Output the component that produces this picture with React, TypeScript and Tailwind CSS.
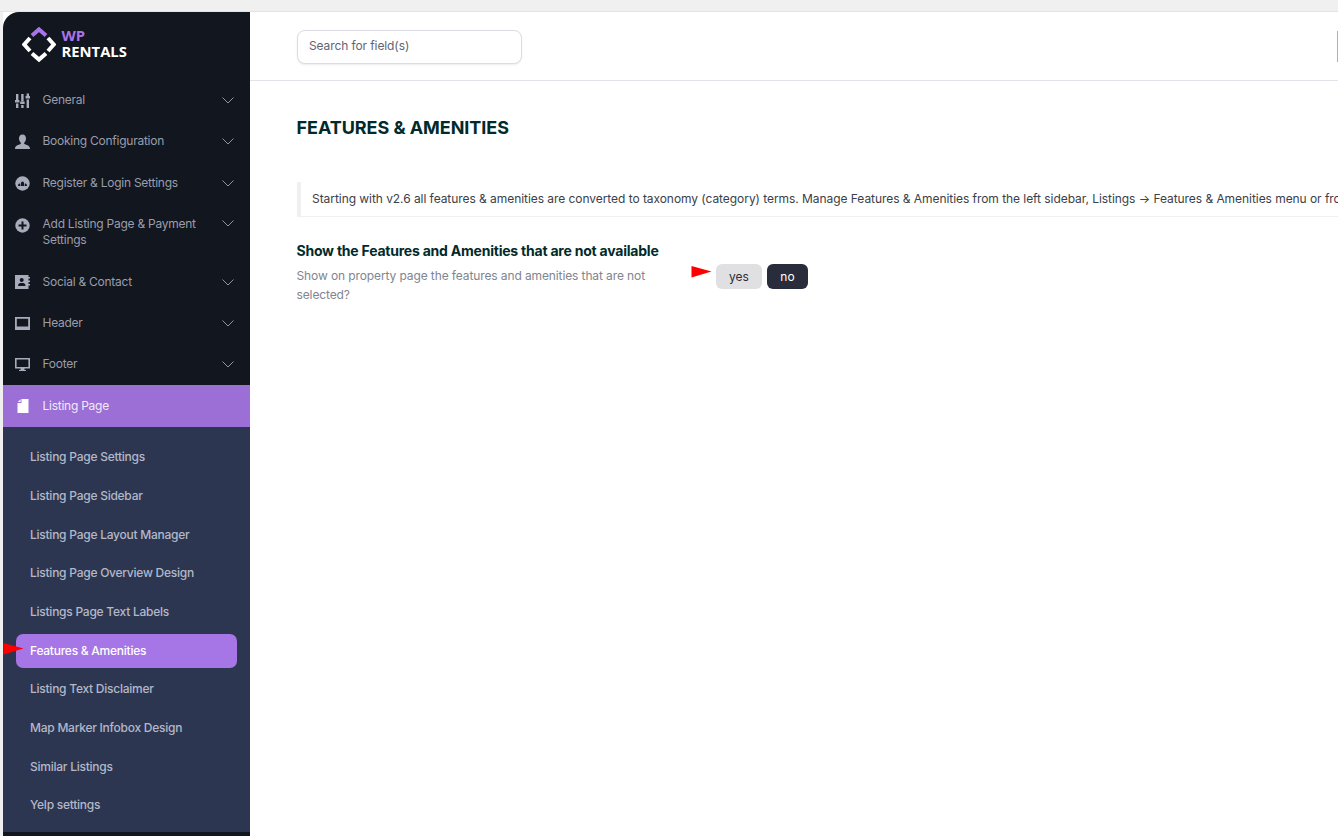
const font = { fontFamily: 'Inter, "Liberation Sans", sans-serif' };

function Chevron() {
  return (
    <svg width="12" height="7" viewBox="0 0 12 7" fill="none" stroke="#8f93a3" strokeWidth="1" className="shrink-0">
      <path d="M0.5 0.5 L6 6 L11.5 0.5" />
    </svg>
  );
}

const ic = '#a8abba';

function IconSliders() {
  return (
    <svg width="15" height="15" viewBox="0 0 15 15" fill={ic}>
      <rect x="1" y="1" width="2.4" height="6" /><rect x="0" y="7" width="4.4" height="2.5" /><rect x="1" y="10.5" width="2.4" height="4.5" />
      <rect x="6.2" y="1" width="2.4" height="7.5" /><rect x="5.2" y="8.5" width="4.4" height="2.5" /><rect x="6.2" y="12" width="2.4" height="3" />
      <rect x="11.6" y="0.5" width="2.4" height="2.5" /><rect x="10.6" y="3" width="4.4" height="2.5" /><rect x="11.6" y="6.5" width="2.4" height="8.5" />
    </svg>
  );
}
function IconUser() {
  return (
    <svg width="15" height="15" viewBox="0 0 15 15" fill={ic}>
      <path d="M7.5 0.5 C10 0.5 11 2.3 11 4.5 C11 6.5 10 8 9.2 8.8 L9.2 10 C11.5 11 15 11.2 15 15 L0 15 C0 11.2 3.5 11 5.8 10 L5.8 8.8 C5 8 4 6.5 4 4.5 C4 2.3 5 0.5 7.5 0.5 Z" />
    </svg>
  );
}
function IconRegister() {
  return (
    <svg width="15" height="15" viewBox="0 0 15 15">
      <circle cx="7.5" cy="7.5" r="7.2" fill={ic} />
      <path d="M3 10 C3 8.2 4 7.6 5.2 7.6 L5.4 10 Z M12 10 C12 8.2 11 7.6 9.8 7.6 L9.6 10 Z M6 10 L6 7.4 C6 6.4 6.6 5.6 7.5 5.6 C8.4 5.6 9 6.4 9 7.4 L9 10 Z" fill="#12161f" />
    </svg>
  );
}
function IconPlus() {
  return (
    <svg width="15" height="15" viewBox="0 0 15 15">
      <circle cx="7.5" cy="7.5" r="7.2" fill={ic} />
      <path d="M6.5 3.5 H8.5 V6.5 H11.5 V8.5 H8.5 V11.5 H6.5 V8.5 H3.5 V6.5 H6.5 Z" fill="#12161f" />
    </svg>
  );
}
function IconContact() {
  return (
    <svg width="15" height="14" viewBox="0 0 15 14">
      <path d="M0 0 H13.5 V2 H15 V3.5 H13.5 V5.5 H15 V7 H13.5 V9 H15 V10.5 H13.5 V14 H0 Z" fill={ic} />
      <circle cx="6.7" cy="5" r="2" fill="#12161f" />
      <path d="M3 11 C3 8.5 4.5 8 6.7 8 C9 8 10.5 8.5 10.5 11 Z" fill="#12161f" />
    </svg>
  );
}
function IconHeader() {
  return (
    <svg width="15" height="13" viewBox="0 0 15 13">
      <path fillRule="evenodd" d="M0 0 H15 V13 H0 Z M1.8 1.8 V9.6 H13.2 V1.8 Z" fill={ic} />
    </svg>
  );
}
function IconFooter() {
  return (
    <svg width="15" height="13" viewBox="0 0 15 13">
      <path fillRule="evenodd" d="M0 0 H15 V10.5 H9.5 V12 H11 V13 H4 V12 H5.5 V10.5 H0 Z M1.6 1.6 V8.9 H13.4 V1.6 Z" fill={ic} />
    </svg>
  );
}
function IconPage() {
  return (
    <svg width="12" height="14" viewBox="0 0 12 14" fill="#fff">
      <path d="M4.5 0 H11.5 V14 H0.5 V4 H4.5 Z M0.8 3 L3.6 0.2 V3 Z" />
    </svg>
  );
}
function Logo() {
  return (
    <svg width="34" height="36" viewBox="0 0 34 36" fill="none" strokeWidth="4" strokeLinejoin="miter" className="shrink-0">
      <path d="M10 8.5 L17 2.4 L24 8.5" stroke="#a974ea" />
      <path d="M8 11 L2.2 17.5 L8 24" stroke="#fff" />
      <path d="M26 11 L31.8 17.5 L26 24" stroke="#fff" />
      <path d="M10 26.5 L17 32.6 L24 26.5" stroke="#fff" />
    </svg>
  );
}

const menu = [
  { label: 'General', icon: <IconSliders />, h: 'h-[41px]' },
  { label: 'Booking Configuration', icon: <IconUser />, h: 'h-[41.5px]' },
  { label: 'Register & Login Settings', icon: <IconRegister />, h: 'h-[42px]' },
  { label: 'Add Listing Page & Payment Settings', icon: <IconPlus />, h: 'h-[57.5px]', multi: true },
  { label: 'Social & Contact', icon: <IconContact />, h: 'h-[41px]' },
  { label: 'Header', icon: <IconHeader />, h: 'h-[41px]' },
  { label: 'Footer', icon: <IconFooter />, h: 'h-[41px]' },
];

const sub = [
  'Listing Page Settings',
  'Listing Page Sidebar',
  'Listing Page Layout Manager',
  'Listing Page Overview Design',
  'Listings Page Text Labels',
  'Features & Amenities',
  'Listing Text Disclaimer',
  'Map Marker Infobox Design',
  'Similar Listings',
  'Yelp settings',
];

function Arrow({ className }: { className: string }) {
  return (
    <svg width="21" height="12" viewBox="0 0 21 12" className={className}>
      <path d="M0.5 0 L20.5 5.5 L0.5 11.5 Z" fill="#fe0000" />
    </svg>
  );
}

export default function App() {
  return (
    <div className="h-[836px] w-[1338px] overflow-hidden bg-[#f0f0f0] pt-[11px]" style={font}>
      <div className="flex h-[825px] border-t border-[#e2e2e8] bg-white">
        <div className="h-full w-[3px] shrink-0 bg-[#f0f0f0]" />
        <aside className="flex h-full w-[247px] shrink-0 flex-col overflow-hidden rounded-tl-[16px] bg-[#12161f]">
          <div className="flex h-[67.5px] shrink-0 items-start pl-[19px] pt-[15px]">
            <Logo />
            <div className="ml-[5.5px] font-['Open_Sans'] text-[14.8px] font-bold leading-[16px]">
              <div className="text-[#a974ea]">WP</div>
              <div className="text-white">RENTALS</div>
            </div>
          </div>
          {menu.map((m) => (
            <div key={m.label} className={`flex ${m.h} shrink-0 ${m.multi ? 'items-start pt-[12px]' : 'items-center'} pl-[12px] pr-[16px]`}>
              <div className={`flex w-[15px] shrink-0 justify-center ${m.multi ? 'mt-[2px]' : ''}`}>{m.icon}</div>
              <div className="ml-[12.5px] w-[170px] text-[12px] leading-[16px] tracking-[-0.25px] text-[#9a9dab]">{m.label}</div>
              <div className={`ml-auto ${m.multi ? 'mt-[4px]' : ''}`}><Chevron /></div>
            </div>
          ))}
          <div className="flex h-[42.5px] shrink-0 items-center bg-[#9b6fd5] pl-[12px]">
            <div className="flex w-[15px] justify-center"><IconPage /></div>
            <div className="ml-[12.5px] text-[12px] tracking-[-0.25px] text-[#f1eafa]">Listing Page</div>
          </div>
          <div className="relative flex h-[405px] shrink-0 flex-col gap-[4.7px] bg-[#2d3651] pl-[13px] pr-[13px] pt-[13.2px]">
            {sub.map((s) => {
              const active = s === 'Features & Amenities';
              return (
                <div
                  key={s}
                  className={`flex h-[34px] shrink-0 items-center rounded-[7px] pl-[14px] text-[12px] font-medium tracking-[-0.25px] ${active ? 'bg-[#a675e6] text-white' : 'text-[#b3b8c8]'}`}
                >
                  {s}
                </div>
              );
            })}
            <Arrow className="absolute left-0 top-[216px]" />
          </div>
        </aside>
        <main className="relative min-w-0 flex-1 overflow-hidden bg-white">
          <div className="flex h-[69px] items-center justify-between border-b border-[#e2e2e8] pl-[47px] pt-[1px]">
            <div className="flex h-[34px] w-[225px] items-center rounded-[8px] border border-[#dcdce4] bg-white pb-[1px] pl-[11px] text-[12px] tracking-[-0.1px] text-[#5f6472] shadow-[0_1px_2px_rgba(0,0,0,0.08)]">
              Search for field(s)
            </div>
            <div className="h-[31px] w-[1px] bg-[#b9a3dd]" />
          </div>
          <div className="pl-[46.5px]">
            <h1 className="mt-[36px] text-[18px] font-bold leading-[22px] tracking-[-0.05px] text-[#012a2a]">FEATURES &amp; AMENITIES</h1>
            <div className="mt-[43px] flex h-[35px] items-center overflow-hidden whitespace-nowrap border-b border-l-[4px] border-[#f0f0f2] pb-[1px] pl-[11.5px] text-[12px] tracking-[-0.055px] text-[#3c4048]">
              Starting with v2.6 all features &amp; amenities are converted to taxonomy (category) terms. Manage Features &amp; Amenities from the left sidebar, Listings → Features &amp; Amenities menu or from the property page.
            </div>
            <div className="mt-[25px] text-[14px] font-bold leading-[18px] tracking-[-0.22px] text-[#012a2a]">Show the Features and Amenities that are not available</div>
            <div className="relative mt-[6px] flex items-start">
              <p className="w-[360px] text-[12px] leading-[19px] tracking-[-0.11px] text-[#80858f]">Show on property page the features and amenities that are not selected?</p>
              <Arrow className="absolute left-[394px] top-[0px]" />
              <div className="absolute left-[419.5px] top-[-2px] flex gap-[5px]">
                <div className="flex h-[25px] w-[46px] items-center justify-center rounded-[6px] bg-[#e0e0e2] text-[12px] text-[#2b2f3a]">yes</div>
                <div className="flex h-[25px] w-[41px] items-center justify-center rounded-[6px] bg-[#292c3a] text-[12px] text-white">no</div>
              </div>
            </div>
          </div>
        </main>
      </div>
    </div>
  );
}
